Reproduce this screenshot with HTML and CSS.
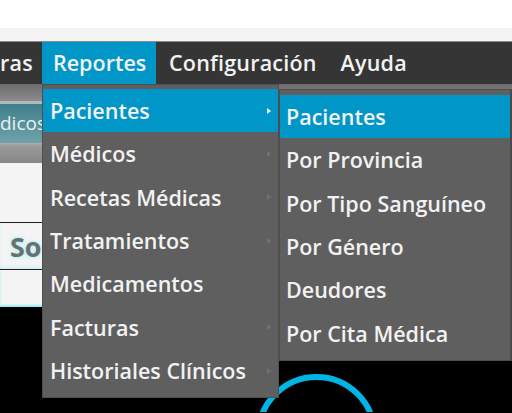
FILE: index.html
```html
<!DOCTYPE html>
<html lang="es">
<head>
<meta charset="utf-8">
<title>Reportes</title>
<link rel="stylesheet" href="styles.css">
</head>
<body>
<div class="app">
  <div class="titlespace"></div>
  <div class="titlestrip"></div>
  <nav class="menubar">
    <div class="mitem first">ras</div>
    <div class="mitem active">Reportes</div>
    <div class="mitem">Configuración</div>
    <div class="mitem">Ayuda</div>
  </nav>
  <div class="content">
    <div class="toolbar"></div>
    <div class="tabrow"><div class="tabbtn">dicos</div></div>
    <div class="toolbar2"></div>
    <div class="panel"></div>
    <div class="titlerow"><span class="glowtext">So</span></div>
    <div class="panel2"></div>
    <div class="stage">
      <svg class="arc" width="512" height="105" viewBox="0 0 512 105">
        <circle cx="316.5" cy="128" r="58" fill="none" stroke="#00b4e6" stroke-width="6"/>
      </svg>
    </div>
  </div>

  <ul class="menu menu1">
    <li class="item sel"><span>Pacientes</span><i class="arrow"></i></li>
    <li class="item"><span>Médicos</span><i class="arrow"></i></li>
    <li class="item"><span>Recetas Médicas</span><i class="arrow"></i></li>
    <li class="item"><span>Tratamientos</span><i class="arrow"></i></li>
    <li class="item"><span>Medicamentos</span></li>
    <li class="item"><span>Facturas</span><i class="arrow"></i></li>
    <li class="item"><span>Historiales Clínicos</span><i class="arrow"></i></li>
  </ul>

  <ul class="menu menu2">
    <li class="item sel"><span>Pacientes</span></li>
    <li class="item"><span>Por Provincia</span></li>
    <li class="item"><span>Por Tipo Sanguíneo</span></li>
    <li class="item"><span>Por Género</span></li>
    <li class="item"><span>Deudores</span></li>
    <li class="item"><span>Por Cita Médica</span></li>
  </ul>
</div>
</body>
</html>
```

FILE: styles.css
```css
* { box-sizing: border-box; }
html, body { margin: 0; padding: 0; }
body {
  width: 512px;
  height: 413px;
  overflow: hidden;
  background: #000;
  font-family: "Open Sans", "Noto Sans", sans-serif;
}
.app {
  position: relative;
  width: 512px;
  height: 413px;
  overflow: hidden;
}
.titlespace { height: 28px; background: #fff; }
.titlestrip { height: 13px; background: #f3f3f3; }
.menubar {
  height: 43px;
  background: #353535;
  border-top: 1px solid #8c8c8c;
  display: flex;
  align-items: stretch;
}
.mitem {
  color: #f2f2f2;
  font-size: 21.5px;
  font-weight: 600;
  line-height: 42px;
  padding: 0 11px 0 13px;
  letter-spacing: 0.2px;
  white-space: nowrap;
}
.mitem.first { width: 42px; padding: 0; }
.mitem.active { background: #0096c8; width: 114px; padding-left: 11px; letter-spacing: 0; }
.content { display: flex; flex-direction: column; }
.toolbar {
  height: 19px;
  background: linear-gradient(#6c6c6c, #8c8c8c);
  border-bottom: 2px solid #b5b5b5;
}
.tabrow { height: 40px; background: #6a6a6a; }
.tabbtn {
  height: 40px;
  width: 120px;
  background: linear-gradient(#3f7e89, #6fa3ab);
  border-top: 1px solid #9cc2c8;
  color: #e8f1f2;
  font-size: 19px;
  line-height: 38px;
}
.toolbar2 {
  height: 20px;
  background: linear-gradient(#b0b0b0 0, #9a9a9a 3px, #878787 100%);
}
.panel {
  height: 60px;
  background: #f4f4f4;
  border-bottom: 1px solid #1e1e1e;
}
.titlerow {
  height: 47px;
  background: #f4f4f4;
  border-bottom: 1px solid #1e1e1e;
  box-shadow: inset 0 -2px 3px rgba(120, 230, 235, 0.3);
  padding-left: 10px;
  display: flex;
  align-items: center;
}
.glowtext {
  font-size: 27px;
  font-weight: 700;
  color: #6e6e6e;
  text-shadow: 0 0 4px #8ff3f8, 0 0 2px #b8fbfd;
}
.panel2 {
  height: 37px;
  background: #f4f4f4;
  box-shadow: inset 0 -2px 2px rgba(110, 235, 240, 0.7);
}
.stage { height: 105px; background: #000; }
.arc { display: block; }

.menu {
  position: absolute;
  list-style: none;
  margin: 0;
  background: #5f5f5f;
  border: 1px solid #4e4e4e;
}
.menu1 { left: 42px; top: 84px; width: 237px; padding: 4px 0 5px; }
.menu2 { left: 279px; top: 89px; width: 233px; padding: 5px 0; border-right: 2px solid #4a4a4a; }
.item {
  height: 43.33px;
  display: flex;
  align-items: center;
  justify-content: space-between;
  color: #f2f2f2;
  font-size: 21.5px;
  font-weight: 600;
  white-space: nowrap;
}
.menu1 .item { padding: 0 7px 0 7px; }
.menu2 .item { padding: 0 6px; }
.item.sel { background: #0096c8; }
.arrow {
  width: 0;
  height: 0;
  border-left: 4px solid #717171;
  border-top: 3.5px solid transparent;
  border-bottom: 3.5px solid transparent;
}
.item.sel .arrow { border-left-color: #ffffff; }
```
